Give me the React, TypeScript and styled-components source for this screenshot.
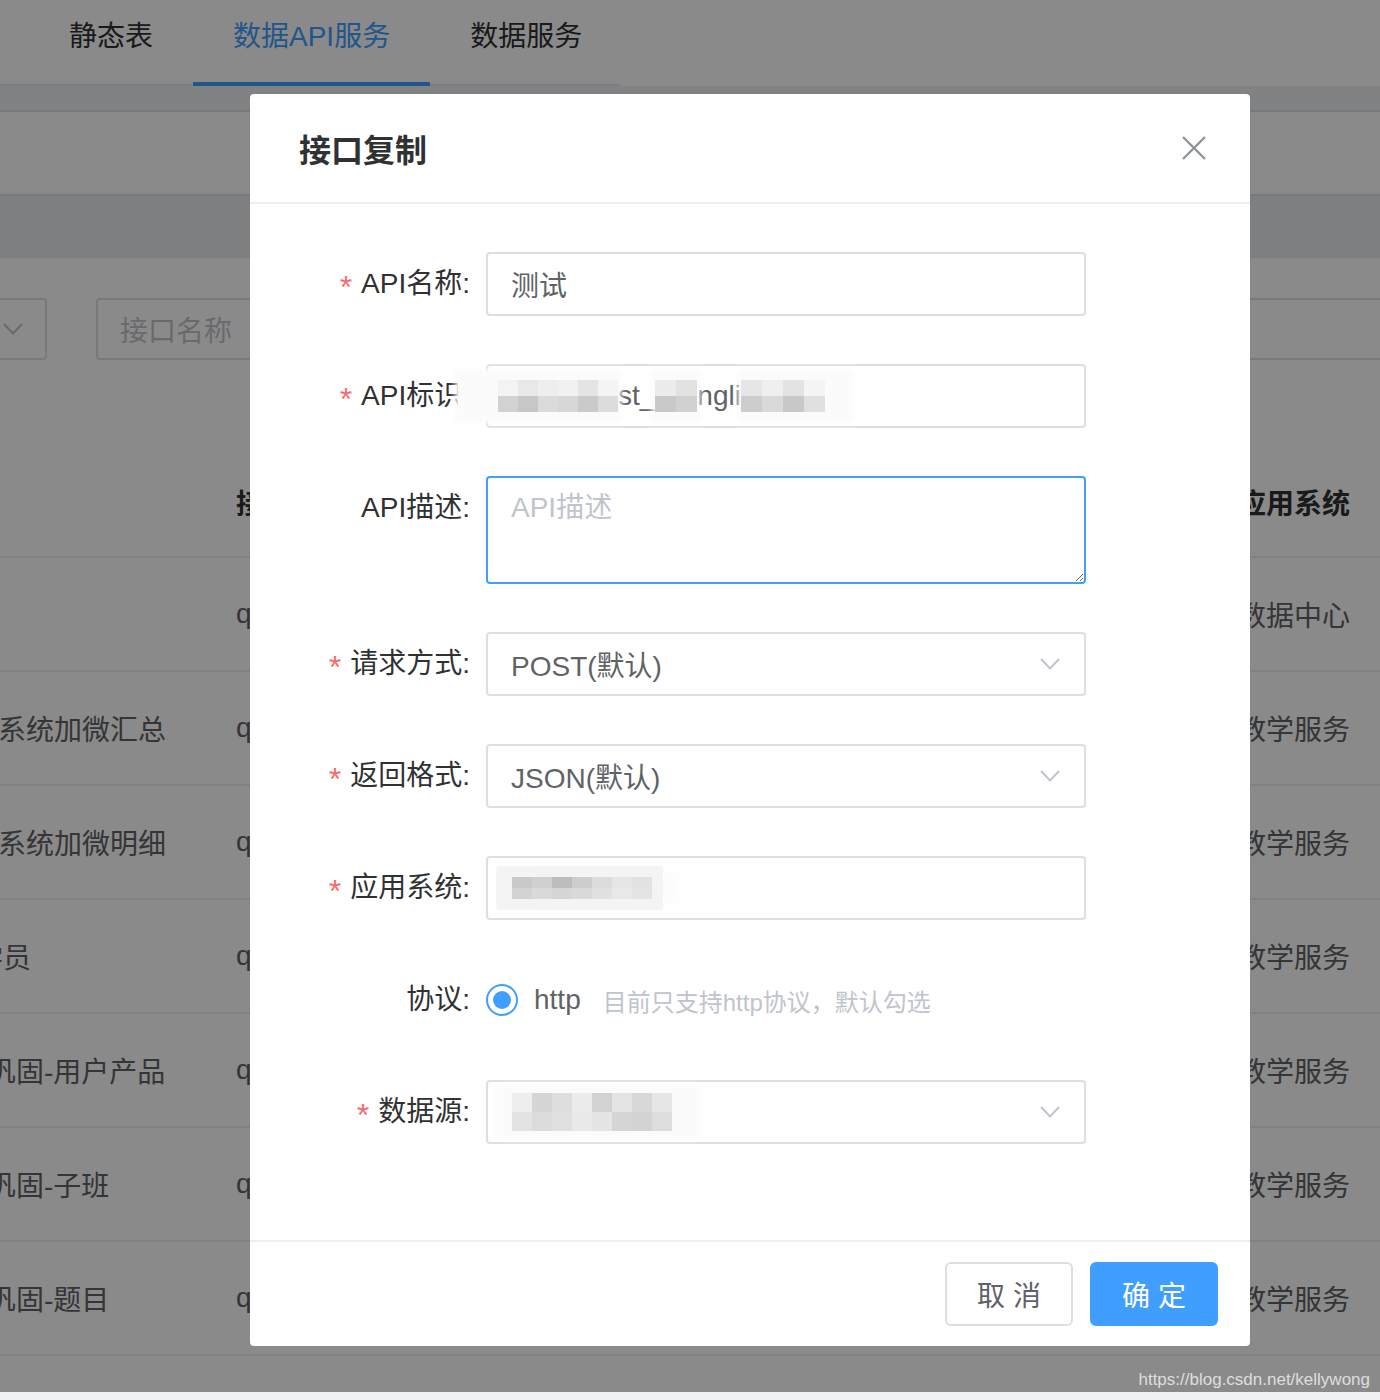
import React from "react";
import styled, { createGlobalStyle } from "styled-components";

const GlobalStyle = createGlobalStyle`
  html, body {
    margin: 0;
    padding: 0;
    background: #f0f1f3;
  }
  body {
    font-family: "Liberation Sans", "Noto Sans CJK SC", sans-serif;
  }
`;

const Page = styled.div`
  position: relative;
  width: 1380px;
  height: 1392px;
  overflow: hidden;
  background: #fff;
  color: #303133;
  font-family: "Liberation Sans", "Noto Sans CJK SC", sans-serif;
  font-size: 28px;
`;

const TabNav = styled.div`
  display: flex;
  width: 620px;
  box-sizing: border-box;
  padding-left: 29px;
  border-bottom: 2px solid #e4e7ed;
`;

const Tab = styled.div<{ $active?: boolean }>`
  position: relative;
  flex-shrink: 0;
  white-space: nowrap;
  height: 84px;
  line-height: 74px;
  padding: 0 40px;
  color: ${(p) => (p.$active ? "#409eff" : "#303133")};
  &::after {
    content: "";
    position: absolute;
    left: 0;
    right: 0;
    bottom: -2px;
    height: 4px;
    background: ${(p) => (p.$active ? "#409eff" : "transparent")};
  }
`;

const Band = styled.div<{ $h: number; $bg: string; $line?: boolean }>`
  height: ${(p) => p.$h}px;
  background: ${(p) => p.$bg};
  border-bottom: ${(p) => (p.$line ? "2px solid #dcdfe4" : "none")};
`;

const FilterRow = styled.div`
  display: flex;
  align-items: center;
  margin-top: 40px;
  height: 62px;
`;

const FilterBox = styled.div<{ $w: number; $ml: number }>`
  display: flex;
  align-items: center;
  box-sizing: border-box;
  width: ${(p) => p.$w}px;
  height: 62px;
  margin-left: ${(p) => p.$ml}px;
  padding: 0 22px;
  border: 2px solid #dcdfe6;
  border-radius: 4px;
  color: #c0c4cc;
  flex-shrink: 0;
  white-space: nowrap;
`;

const FilterEnd = styled(FilterBox)`
  margin-left: auto;
  margin-right: -40px;
`;

const Table = styled.div`
  margin-top: 88px;
  margin-left: -28px;
  width: 1408px;
`;

const TRow = styled.div<{ $head?: boolean }>`
  display: grid;
  grid-template-columns: 264px 1fr 142px;
  align-items: center;
  height: ${(p) => (p.$head ? 108 : 112)}px;
  border-bottom: 2px solid #ebeef5;
  font-weight: ${(p) => (p.$head ? 700 : 400)};
  color: ${(p) => (p.$head ? "#303133" : "#606266")};
  white-space: nowrap;
`;

const TCell = styled.div<{ $lead?: number }>`
  padding-left: ${(p) => p.$lead ?? 0}px;
  overflow: hidden;
`;

const Mask = styled.div`
  position: absolute;
  inset: 0;
  background: rgba(0, 0, 0, 0.46);
  z-index: 10;
`;

const Watermark = styled.div`
  position: absolute;
  right: 10px;
  bottom: 2px;
  z-index: 30;
  font-size: 17px;
  color: #dedede;
`;

const Modal = styled.div`
  position: absolute;
  top: 94px;
  left: 250px;
  width: 1000px;
  z-index: 20;
  background: #fff;
  border-radius: 4px;
  display: flex;
  flex-direction: column;
`;

const ModalHeader = styled.div`
  display: flex;
  align-items: center;
  justify-content: space-between;
  height: 108px;
  padding: 0 44px 0 49px;
  border-bottom: 2px solid #ebeef5;
`;

const Title = styled.div`
  font-size: 32px;
  font-weight: 700;
  color: #303133;
`;

const ModalBody = styled.div`
  padding: 48px 0 96px;
`;

const FormItem = styled.div`
  display: flex;
  align-items: flex-start;
  margin-bottom: 48px;
  &:last-child {
    margin-bottom: 0;
  }
`;

const Label = styled.div`
  width: 236px;
  height: 64px;
  flex-shrink: 0;
  box-sizing: border-box;
  padding-right: 16px;
  text-align: right;
  line-height: 64px;
  color: #303133;
  white-space: nowrap;
`;

const Star = styled.span`
  color: #f56c6c;
  font-size: 32px;
  line-height: 0;
  vertical-align: -5px;
  margin-right: 9px;
`;

const Field = styled.div`
  display: flex;
  align-items: center;
  box-sizing: border-box;
  width: 600px;
  height: 64px;
  padding: 0 24px 0 23px;
  border: 2px solid #dcdfe6;
  border-radius: 4px;
  color: #606266;
  white-space: nowrap;
`;

const Chevron = styled.svg`
  margin-left: auto;
  flex-shrink: 0;
`;

const TextArea = styled.textarea`
  display: block;
  box-sizing: border-box;
  width: 600px;
  height: 108px;
  padding: 10px 23px;
  border: 2px solid #409eff;
  border-radius: 4px;
  outline: none;
  resize: vertical;
  font-family: "Liberation Sans", "Noto Sans CJK SC", sans-serif;
  font-size: 28px;
  line-height: 40px;
  color: #606266;
  &::placeholder {
    color: #c0c4cc;
  }
`;

const RadioLine = styled.div`
  display: flex;
  align-items: center;
  height: 64px;
`;

const RadioDot = styled.span`
  display: flex;
  align-items: center;
  justify-content: center;
  box-sizing: border-box;
  width: 32px;
  height: 32px;
  border: 2px solid #409eff;
  border-radius: 50%;
  &::after {
    content: "";
    width: 18px;
    height: 18px;
    border-radius: 50%;
    background: #409eff;
  }
`;

const RadioText = styled.span`
  margin-left: 16px;
  color: #606266;
`;

const Hint = styled.span`
  margin-left: 22px;
  font-size: 24px;
  color: #c0c4cc;
`;

const ModalFooter = styled.div`
  display: flex;
  justify-content: flex-end;
  gap: 17px;
  padding: 20px 32px;
  border-top: 2px solid #ebeef5;
`;

const Button = styled.button<{ $primary?: boolean }>`
  width: 128px;
  height: 64px;
  box-sizing: border-box;
  border: 2px solid ${(p) => (p.$primary ? "#409eff" : "#dcdfe6")};
  border-radius: 6px;
  background: ${(p) => (p.$primary ? "#409eff" : "#fff")};
  color: ${(p) => (p.$primary ? "#fff" : "#606266")};
  font-family: "Liberation Sans", "Noto Sans CJK SC", sans-serif;
  font-size: 28px;
  cursor: pointer;
`;

/* blurred-out private values */
const Redact = styled.span<{ $shift?: number; $pad: string }>`
  position: relative;
  z-index: 1;
  display: inline-flex;
  align-items: center;
  flex-shrink: 0;
  margin-left: ${(p) => p.$shift ?? 0}px;
  padding: ${(p) => p.$pad};
  background: #fbfbfb;
  box-shadow: 0 0 6px 3px #fbfbfb;
`;

const MosaicGrid = styled.span<{ $cols: number; $cw: number; $ch: number }>`
  display: inline-grid;
  grid-template-columns: repeat(${(p) => p.$cols}, ${(p) => p.$cw}px);
  grid-auto-rows: ${(p) => p.$ch}px;
  filter: blur(0.7px);
`;

const Cell = styled.span<{ $c: string }>`
  background: ${(p) => p.$c};
`;

const Tag = styled.span`
  display: inline-flex;
  align-items: center;
  height: 44px;
  width: 167px;
  box-sizing: border-box;
  margin-left: -15px;
  padding-left: 16px;
  border-radius: 4px;
  background: #f4f4f5;
  box-shadow: 20px 0 16px -6px #fbfbfb;
`;

const Mosaic: React.FC<{ cols: number; cw: number; ch: number; colors: string[] }> = ({
  cols,
  cw,
  ch,
  colors,
}) => (
  <MosaicGrid $cols={cols} $cw={cw} $ch={ch}>
    {colors.map((c, i) => (
      <Cell key={i} $c={c} />
    ))}
  </MosaicGrid>
);

const Down = () => (
  <Chevron width="20" height="12" viewBox="0 0 20 12">
    <polyline points="1,1 10,10.5 19,1" fill="none" stroke="#c0c4cc" strokeWidth="2" />
  </Chevron>
);

const rows = [
  { name: "", lead: 0, app: "数据中心" },
  { name: "系统加微汇总", lead: 26, app: "教学服务" },
  { name: "系统加微明细", lead: 26, app: "教学服务" },
  { name: "学员", lead: 3, app: "教学服务" },
  { name: "巩固-用户产品", lead: 16, app: "教学服务" },
  { name: "巩固-子班", lead: 16, app: "教学服务" },
  { name: "巩固-题目", lead: 16, app: "教学服务" },
];

const App: React.FC = () => {
  return (
    <Page>
      <GlobalStyle />
      <TabNav>
        <Tab>静态表</Tab>
        <Tab $active>数据API服务</Tab>
        <Tab>数据服务</Tab>
      </TabNav>
      <Band $h={24} $bg="#eef0f3" $line />
      <Band $h={82} $bg="#fdfdfe" $line />
      <Band $h={62} $bg="#e9ebee" />
      <FilterRow>
        <FilterBox $w={160} $ml={-113}>
          <Down />
        </FilterBox>
        <FilterBox $w={400} $ml={49}>
          接口名称
        </FilterBox>
        <FilterEnd $w={220} $ml={0} />
      </FilterRow>
      <Table>
        <TRow $head>
          <TCell />
          <TCell>接口名称</TCell>
          <TCell>应用系统</TCell>
        </TRow>
        {rows.map((r, i) => (
          <TRow key={i}>
            <TCell $lead={r.lead}>{r.name}</TCell>
            <TCell>qa_data_api</TCell>
            <TCell>{r.app}</TCell>
          </TRow>
        ))}
        <TRow />
      </Table>
      <Mask />
      <Modal>
        <ModalHeader>
          <Title>接口复制</Title>
          <svg width="24" height="24" viewBox="0 0 24 24">
            <path d="M1 1 L23 23 M23 1 L1 23" stroke="#909399" strokeWidth="2.4" fill="none" />
          </svg>
        </ModalHeader>
        <ModalBody>
          <FormItem>
            <Label>
              <Star>*</Star>API名称:
            </Label>
            <Field>测试</Field>
          </FormItem>
          <FormItem>
            <Label>
              <Star>*</Star>API标识:
            </Label>
            <Field>
              <Redact $shift={-53} $pad="8px 0 8px 40px">
                <Mosaic
                  cols={6}
                  cw={20}
                  ch={16}
                  colors={[
                    "#f3f3f3", "#e8e8e8", "#eeeeee", "#f1f1f1", "#e4e4e4", "#f4f4f4",
                    "#d2d2d2", "#c7c7c7", "#dbdbdb", "#d7d7d7", "#cacaca", "#dcdcdc",
                  ]}
                />
              </Redact>
              <span>st_</span>
              <Redact $pad="8px 0">
                <Mosaic cols={2} cw={21} ch={16} colors={["#ececec", "#e2e2e2", "#c9c9c9", "#d1d1d1"]} />
              </Redact>
              <span>ngli</span>
              <Redact $pad="8px 24px 8px 0">
                <Mosaic
                  cols={4}
                  cw={21}
                  ch={16}
                  colors={["#e6e6e6", "#efefef", "#e3e3e3", "#f4f4f4", "#cdcdcd", "#d9d9d9", "#c8c8c8", "#e0e0e0"]}
                />
              </Redact>
            </Field>
          </FormItem>
          <FormItem>
            <Label>API描述:</Label>
            <TextArea placeholder="API描述" />
          </FormItem>
          <FormItem>
            <Label>
              <Star>*</Star>请求方式:
            </Label>
            <Field>
              POST(默认)
              <Down />
            </Field>
          </FormItem>
          <FormItem>
            <Label>
              <Star>*</Star>返回格式:
            </Label>
            <Field>
              JSON(默认)
              <Down />
            </Field>
          </FormItem>
          <FormItem>
            <Label>
              <Star>*</Star>应用系统:
            </Label>
            <Field>
              <Tag>
                <Mosaic
                  cols={7}
                  cw={20}
                  ch={11}
                  colors={[
                    "#c9c9c9", "#d0d0d0", "#bdbdbd", "#cdcdcd", "#dcdcdc", "#e6e6e6", "#e2e2e2",
                    "#d3d3d3", "#dadada", "#d6d6d6", "#d9d9d9", "#e1e1e1", "#e8e8e8", "#e4e4e4",
                  ]}
                />
              </Tag>
            </Field>
          </FormItem>
          <FormItem>
            <Label>协议:</Label>
            <RadioLine>
              <RadioDot />
              <RadioText>http</RadioText>
              <Hint>目前只支持http协议，默认勾选</Hint>
            </RadioLine>
          </FormItem>
          <FormItem>
            <Label>
              <Star>*</Star>数据源:
            </Label>
            <Field>
              <Redact $shift={-13} $pad="4px 24px 4px 14px">
                <Mosaic
                  cols={8}
                  cw={20}
                  ch={19}
                  colors={[
                    "#eeeeee", "#d6d6d6", "#dedede", "#ececec", "#d2d2d2", "#e4e4e4", "#d8d8d8", "#e6e6e6",
                    "#e3e3e3", "#dcdcdc", "#e0e0e0", "#e9e9e9", "#e5e5e5", "#d6d6d6", "#d3d3d3", "#dddddd",
                  ]}
                />
              </Redact>
              <Down />
            </Field>
          </FormItem>
        </ModalBody>
        <ModalFooter>
          <Button>取 消</Button>
          <Button $primary>确 定</Button>
        </ModalFooter>
      </Modal>
      <Watermark>https://blog.csdn.net/kellywong</Watermark>
    </Page>
  );
};

export default App;
